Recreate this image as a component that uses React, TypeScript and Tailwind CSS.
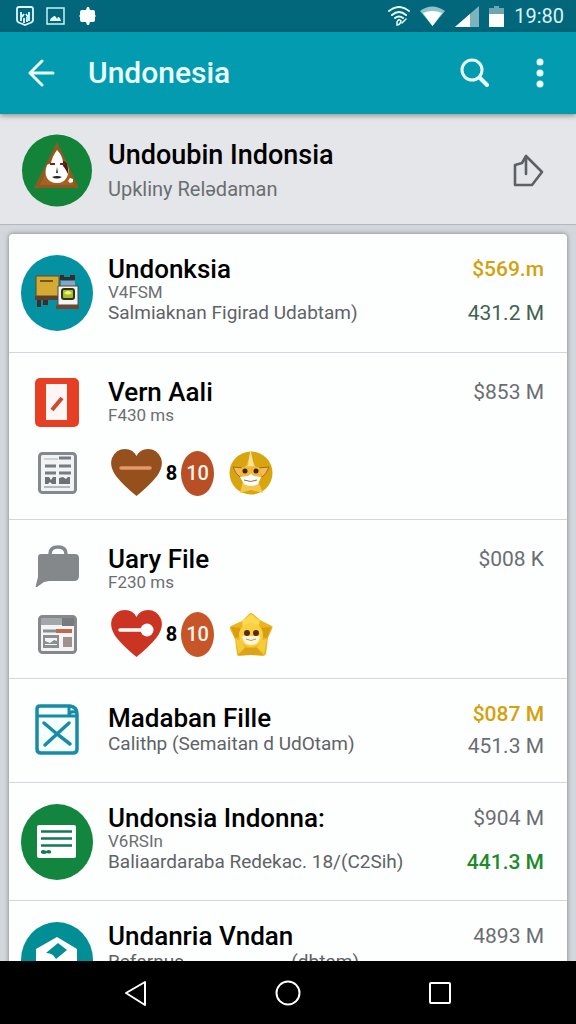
import type { ReactNode } from 'react';
import clsx from 'clsx';

type Amount = { text: string; className: string };

type RowProps = {
    icon: ReactNode;
    title: string;
    small?: string;
    detail?: ReactNode;
    amounts: Amount[];
    className?: string;
    amountsClassName?: string;
};

const GRAY = 'text-[#6b6e71]';
const GOLD = 'text-[#d4a10c] font-medium';

function StatusBar() {
    return (
        <div className="h-8 shrink-0 bg-[#02677b] flex items-center justify-between pl-4 pr-3">
            <div className="flex items-center gap-3">
                <svg width="18" height="20" viewBox="0 0 18 20" fill="none" stroke="#dff8fc" strokeWidth="1.8">
                    <path d="M3 1h12q2 0 2 2v11q0 2-3 3l-5 2-5-2q-3-1-3-3V3q0-2 2-2z" />
                    <path d="M5 6v9M13 6v9M6 11l2-3M12 11l-2-3M8 12v5M11 11v5" />
                </svg>
                <svg width="20" height="18" viewBox="0 0 20 18">
                    <rect x="1" y="1" width="17" height="16" fill="none" stroke="#c9f2f7" strokeWidth="1.5" />
                    <path d="M4 14q0-3 3-4 1-2 3 0l1 2 1-2q2 0 3 4z" fill="#eaffff" />
                </svg>
                <svg width="20" height="20" viewBox="0 0 20 20" fill="#fff">
                    <path d="M4 4h4l1-3h2l1 3h3q2 0 2 2v3l1 1-1 1v3q0 2-2 2h-3l-1 3H9l-1-3H4q-2 0-2-2v-3l-1-1 1-1V6q0-2 2-2z" />
                </svg>
            </div>
            <div className="flex items-center gap-2.5">
                <svg width="22" height="20" viewBox="0 0 22 20" fill="none" stroke="#eaffff" strokeWidth="2" strokeLinecap="round">
                    <path d="M1 5Q11-3 21 5M4 9Q11 3 18 9M7 12q4-3 8 0" />
                    <path d="M9 16q2-4 4-1-1 4-4 4zM14 17l4-4" strokeWidth="1.500" />
                </svg>
                <svg width="25" height="20" viewBox="0 0 25 20">
                    <path d="M0 5Q12-4 25 5L12.500 20z" fill="#8ec3cc" />
                    <path d="M3 7Q12 3 22 7L12.500 20z" fill="#fff" />
                </svg>
                <svg width="24" height="21" viewBox="0 0 24 21">
                    <path d="M24 0v21H0z" fill="#7db2be" />
                    <path d="M15 8v13H0z" fill="#fff" />
                </svg>
                <svg width="15" height="21" viewBox="0 0 15 21">
                    <path d="M5 0h5v2h5v7H0V2h5z" fill="#6ea5b2" />
                    <path d="M0 8h15v13H0z" fill="#fff" />
                </svg>
                <span className="text-[20px] leading-6 text-[#d9f3f7]">19:80</span>
            </div>
        </div>
    );
}

function Toolbar() {
    return (
        <header className="relative z-10 h-[82px] shrink-0 bg-[#039bb0] shadow-[0_2px_5px_rgba(0,0,0,0.35)] flex items-center px-7 text-[#eaffff]">
            <button type="button" aria-label="Back">
                <svg width="27" height="28" viewBox="0 0 27 28" fill="none" stroke="currentColor" strokeWidth="3" strokeLinecap="round" strokeLinejoin="round">
                    <path d="M25 14H2M14 2L2 14l12 12" />
                </svg>
            </button>
            <h1 className="ml-[33px] flex-1 text-[30px] leading-9 font-medium">Undonesia</h1>
            <button type="button" aria-label="Search">
                <svg width="30" height="30" viewBox="0 0 30 30" fill="none" stroke="currentColor" strokeLinecap="round">
                    <circle cx="12" cy="12" r="10" strokeWidth="3" />
                    <path d="M20 20l7 7" strokeWidth="4" />
                </svg>
            </button>
            <button type="button" aria-label="More options" className="ml-[42px]">
                <svg width="16" height="30" viewBox="0 0 16 30" fill="currentColor">
                    <circle cx="8" cy="4" r="3.500" />
                    <circle cx="8" cy="15" r="3.500" />
                    <circle cx="8" cy="26" r="3.500" />
                </svg>
            </button>
        </header>
    );
}

function Profile() {
    return (
        <section className="shrink-0 bg-[#e4e6e9] border-b border-[#b3b8bc] flex items-center pl-[21px] pr-8 pt-5 pb-[17px]">
            <svg className="shrink-0" width="72" height="73" viewBox="0 0 72 73">
                <ellipse cx="36" cy="36.500" rx="35" ry="36" fill="#14833a" />
                <path d="M36 8L58 54H13z" fill="#8f5a22" />
                <path d="M36 15L53 51H19z" fill="#a8621f" />
                <path d="M36 16q-5 7-6 13l-4 2q-3 8 0 13 3 5 10 5t10-6q3-7 0-13l-4-2q-1-7-6-12z" fill="#fff" />
                <path d="M42 27q5 1 5 7v6q-3-6-5-8z" fill="#4a1c14" />
                <path d="M29 29h5v2h-5zM39 29h5v2h-5z" fill="#8b1a12" />
                <path d="M36 33l-1 6h2z" fill="#333" />
                <path d="M31 43q5-2 10 0-5 3-10 0z" fill="#222" />
                <path d="M49 44l3 1v3l-3 1-2-2z" fill="#fff" />
            </svg>
            <div className="ml-[15px] flex-1 min-w-0">
                <h2 className="text-[27px] leading-7 font-medium text-black">Undoubin Indonsia</h2>
                <p className="mt-2 text-[20px] leading-6 text-[#6b6e71]">Upkliny Relədaman</p>
            </div>
            <button type="button" aria-label="Share">
                <svg width="32" height="34" viewBox="0 0 32 34" fill="none" stroke="#5c6166" strokeWidth="2.600" strokeLinejoin="round" strokeLinecap="round">
                    <path d="M14 2l16 16-10 13H3V11l7-2 4-7v18" />
                </svg>
            </button>
        </section>
    );
}

function MachineAvatar() {
    return (
        <svg width="72" height="76" viewBox="0 0 72 76">
            <ellipse cx="36" cy="38" rx="36" ry="38" fill="#0492a2" />
            <path d="M16 44h4v8h-4zM22 43h5v7h-5z" fill="#3d2c28" />
            <path d="M15 21h23v20H15z" fill="#d5aa33" stroke="#5c4a24" />
            <path d="M19 26h13" stroke="#4e3b16" strokeWidth="1.500" />
            <path d="M14 41h24v4H14z" fill="#5b4130" />
            <path d="M39 20h4v2h6v-2h5v5H39z" fill="#3a2a28" />
            <path d="M40 26h14v6H40z" fill="#8aa5c4" />
            <path d="M37 31h20v19H37z" fill="#f3f4f6" stroke="#594743" />
            <path d="M35 50h23v4H35z" fill="#70482f" />
            <rect x="41" y="34" width="12" height="10" rx="2" fill="#a9bf2a" stroke="#2e3417" strokeWidth="2" />
            <path d="M43 38q4-4 8 0-4 3-8 0z" fill="#eef27c" />
        </svg>
    );
}

function RedDocIcon() {
    return (
        <svg width="44" height="49" viewBox="0 0 44 49">
            <rect width="44" height="49" rx="5" fill="#e63f23" />
            <path d="M11 6h21v36H11z" fill="#fdf6f5" />
            <path d="M17 32l10-12" stroke="#cf4a2d" strokeWidth="4" />
        </svg>
    );
}

function NewsIcon() {
    return (
        <svg width="39" height="42" viewBox="0 0 39 42">
            <rect x="1.500" y="1.500" width="36" height="39" rx="3" fill="#f1f3f4" stroke="#84898d" strokeWidth="3" />
            <path d="M6 7h14" stroke="#c3c7ca" strokeWidth="1.500" />
            <path d="M21 6h12M7 14h11M21 14h12M7 21h11M21 21h12" stroke="#777c80" strokeWidth="3" />
            <path d="M7 25h4l2 3 2-3h3v7h-4l-2-2-2 2H7zM21 26l4-1 3 2 2-2h2v7H21z" fill="#6c7175" />
            <path d="M6 35h26" stroke="#9ea3a6" strokeWidth="1.500" />
        </svg>
    );
}

function BagIcon() {
    return (
        <svg width="44" height="42" viewBox="0 0 44 42">
            <path d="M15 9q0-7 8-7t8 7" fill="none" stroke="#85888b" strokeWidth="3.500" />
            <path d="M6 9h34q4 0 4 4v18q0 5-5 5H14l-5 1-7 5q-2 1-1-2l2-8V12q0-3 3-3z" fill="#85888b" />
        </svg>
    );
}

function LayoutIcon() {
    return (
        <svg width="39" height="39" viewBox="0 0 39 39">
            <rect x="1.500" y="1.500" width="36" height="36" rx="3" fill="#f3f4f5" stroke="#85898c" strokeWidth="3" />
            <path d="M3 3h21v7H3z" fill="#a4a7a9" />
            <path d="M24 3h12v8H24z" fill="#777b7e" />
            <path d="M5 16h15" stroke="#8a8e91" strokeWidth="3" />
            <path d="M18 16h16" stroke="#c0694f" strokeWidth="4" />
            <path d="M5 20h16v13H5z" fill="#8b8f92" />
            <path d="M7 23h12v3l-3-1-4 3-5-2zM7 29h12v1H7z" fill="#f3f4f5" />
            <path d="M25 22h9v10h-9z" fill="#a0908e" />
        </svg>
    );
}

function BlueDocIcon() {
    return (
        <svg width="44" height="51" viewBox="0 0 44 51" fill="none" stroke="#168ca5" strokeLinecap="round">
            <path d="M5 2h30q7 1 7 8v35q0 4-4 4H6q-4 0-4-4V5q0-3 3-3z" fill="#f6feff" strokeWidth="3.500" />
            <path d="M3 12h38M34 3v8q1-4 6-3" strokeWidth="3" />
            <path d="M9 19l13 11 13 10M34 19L22 30 10 41" strokeWidth="3.500" />
        </svg>
    );
}

function CardAvatar() {
    return (
        <svg width="72" height="76" viewBox="0 0 72 76">
            <ellipse cx="36" cy="38" rx="36" ry="38" fill="#12853e" />
            <rect x="16" y="21" width="39" height="33" rx="2" fill="#fff" />
            <path d="M20 27.500h31M20 34.500h31M20 41.500h31" stroke="#157a54" strokeWidth="2.500" />
            <path d="M20 47q2-2 5 0 3-2 5 0v2q-2 1-4 0-3 2-6 0z" fill="#157a54" />
        </svg>
    );
}

function BoxAvatar() {
    return (
        <svg width="72" height="76" viewBox="0 0 72 76">
            <ellipse cx="36" cy="38" rx="36" ry="38" fill="#028e95" />
            <path d="M15 27l21-12 20 12v27L36 64 15 54z" fill="#fff" />
            <path d="M25 31l12-10 9 7-11 9-3-4q-3-2-7-2z" fill="#028e95" />
        </svg>
    );
}

function HeartIcon({ red }: { red?: boolean }) {
    return (
        <svg width="51" height="48" viewBox="0 0 51 48">
            <path d="M25.500 47Q12 36 5 27-2 17 1 9 5 0 14 0q8 0 11.500 7Q29 0 37 0q9 0 13 9 3 8-4 18-7 9-20.500 20z" fill={red ? '#cb3422' : '#96501d'} />
            {red ? (
                <>
                    <path d="M9 20h24" stroke="#fff" strokeWidth="3.500" strokeLinecap="round" />
                    <circle cx="36" cy="20" r="6.500" fill="#fff" />
                </>
            ) : (
                <path d="M10 19h29" stroke="#e4986b" strokeWidth="3.500" strokeLinecap="round" />
            )}
        </svg>
    );
}

function CatFace() {
    return (
        <svg width="44" height="46" viewBox="0 0 44 46">
            <circle cx="22" cy="23" r="21.500" fill="#d8a50f" />
            <path d="M21 4l5 12 4 3-1 12 5 12-12-3-11 3 3-12-1-12 5-4z" fill="#f3c64c" />
            <path d="M21 2h1l3 14h-6z" fill="#f9e296" />
            <path d="M4 17l11 1-4 9q-4-2-7-10zM40 17l-11 1 4 9q4-2 7-10z" fill="#f5b95b" stroke="#a06c13" />
            <path d="M13 17h17l3 9-4 7H15l-4-7z" fill="#f0b93c" />
            <path d="M11 27l8-1 3-2 3 2 7 1-3 7q-7 4-14 0z" fill="#fff" />
            <circle cx="16" cy="21" r="2.500" fill="#432405" />
            <circle cx="27" cy="21" r="2.500" fill="#432405" />
            <path d="M15 30q7 3 13 0" fill="none" stroke="#936a42" />
        </svg>
    );
}

function StarFace() {
    return (
        <svg width="44" height="46" viewBox="0 0 44 46">
            <path d="M20 3q2-2 4 0l7 6 12 6q1 1 0 3l-4 9-2 16q-1 2-3 2l-12-1-12 1q-2 0-2-2L6 28 1 18q-1-2 1-3l11-5z" fill="#eab61c" />
            <path d="M22 3l9 7-2 6-7-3-8 3-1-6z" fill="#fbd950" />
            <path d="M42 16l-4 11-5-1-3-9zM2 16l11 1-3 9-4 1z" fill="#d99c12" />
            <path d="M6 28l5 1 5 7-6 7zM38 28l-5 1-5 7 7 7z" fill="#f5cb3c" />
            <path d="M16 37h12l6 7H9z" fill="#dda318" />
            <circle cx="22" cy="24" r="12" fill="#f9cf43" />
            <path d="M13 25h18q-1 9-9 9t-9-9z" fill="#fff6dc" />
            <circle cx="18" cy="22" r="3" fill="#5c2b0c" />
            <circle cx="27" cy="22" r="3" fill="#5c2b0c" />
            <path d="M17 28q5 3 10 0" fill="none" stroke="#c69655" />
        </svg>
    );
}

function Reactions({ red }: { red?: boolean }) {
    return (
        <div className="flex items-center h-12 pl-[3px]">
            <HeartIcon red={red} />
            <span className="w-[19px] text-center text-[20px] leading-6 font-bold text-black">8</span>
            <span className={clsx('w-[33px] h-[45px] rounded-[50%] flex items-center justify-center text-[20px] leading-6 font-medium text-[#fff3ec]', red ? 'bg-[#c65528]' : 'bg-[#b94f25]')}>
                10
            </span>
            <span className="ml-[15px]">{red ? <StarFace /> : <CatFace />}</span>
        </div>
    );
}

function Row({ icon, title, small, detail, amounts, className, amountsClassName }: RowProps) {
    return (
        <div className={clsx('flex items-start pl-3 pr-[23px]', className)}>
            <div className="w-[72px] shrink-0 flex justify-center">{icon}</div>
            <div className="ml-[15px] flex-1 min-w-0">
                <h3 className="text-[26px] leading-7 font-medium text-black">{title}</h3>
                {small && <p className="text-[17px] leading-[18px] text-[#6b6e71]">{small}</p>}
                {detail && <div className="text-[19px] leading-6 text-[#606366] whitespace-nowrap">{detail}</div>}
            </div>
            <div className={clsx('flex flex-col items-end text-[21px] leading-7', amountsClassName)}>
                {amounts.map((a) => (
                    <span key={a.text} className={a.className}>{a.text}</span>
                ))}
            </div>
        </div>
    );
}

function NavBar() {
    return (
        <nav className="h-[63px] shrink-0 bg-black flex items-center justify-center gap-[127px]">
            <button type="button" aria-label="Back">
                <svg width="24" height="28" viewBox="0 0 24 28" fill="none" stroke="#fff" strokeWidth="2" strokeLinejoin="round">
                    <path d="M21 3v23L2 14z" />
                </svg>
            </button>
            <button type="button" aria-label="Home">
                <svg width="26" height="26" viewBox="0 0 26 26" fill="none" stroke="#fff" strokeWidth="2">
                    <circle cx="13" cy="13" r="11.500" />
                </svg>
            </button>
            <button type="button" aria-label="Recent apps">
                <svg width="24" height="24" viewBox="0 0 24 24" fill="none" stroke="#fff" strokeWidth="2">
                    <rect x="2" y="2" width="20" height="20" rx="1" />
                </svg>
            </button>
        </nav>
    );
}

export default function App() {
    return (
        <div className="h-screen flex flex-col overflow-hidden bg-[#d3d6da] font-[Roboto,sans-serif]">
            <StatusBar />
            <Toolbar />
            <Profile />

            <main className="flex-1 min-h-0 overflow-hidden px-[9px] pt-[9px]">
                <ul className="bg-[#fdfefe] rounded-t-sm shadow-[0_0_5px_rgba(0,0,0,0.4)] divide-y divide-[#d3d6dc]">
                    <li>
                        <Row
                            className="pt-[21px] pb-[21px]"
                            icon={<MachineAvatar />}
                            title="Undonksia"
                            small="V4FSM"
                            detail="Salmiaknan Figirad Udabtam)"
                            amounts={[
                                { text: '$569.m', className: GOLD },
                                { text: '431.2 M', className: 'text-[#3f6350]' },
                            ]}
                            amountsClassName="gap-4"
                        />
                    </li>
                    <li>
                        <Row
                            className="pt-[25px]"
                            icon={<RedDocIcon />}
                            title="Vern Aali"
                            small="F430 ms"
                            amounts={[{ text: '$853 M', className: GRAY }]}
                        />
                        <div className="flex items-center pl-3 pt-[22px] pb-[22px]">
                            <div className="w-[72px] mr-[15px] flex justify-center"><NewsIcon /></div>
                            <Reactions />
                        </div>
                    </li>
                    <li>
                        <Row
                            className="pt-[25px]"
                            icon={<BagIcon />}
                            title="Uary File"
                            small="F230 ms"
                            amounts={[{ text: '$008 K', className: GRAY }]}
                        />
                        <div className="flex items-center pl-3 pt-[19px] pb-[20px]">
                            <div className="w-[72px] mr-[15px] flex justify-center"><LayoutIcon /></div>
                            <Reactions red />
                        </div>
                    </li>
                    <li>
                        <Row
                            className="pt-[25px] pb-[22px]"
                            icon={<BlueDocIcon />}
                            title="Madaban Fille"
                            detail="Calithp (Semaitan d UdOtam)"
                            amounts={[
                                { text: '$087 M', className: GOLD },
                                { text: '451.3 M', className: GRAY },
                            ]}
                            amountsClassName="gap-1 -mt-1"
                        />
                    </li>
                    <li>
                        <Row
                            className="pt-[21px] pb-[20px]"
                            icon={<CardAvatar />}
                            title="Undonsia Indonna:"
                            small="V6RSIn"
                            detail="Baliaardaraba Redekac. 18/(C2Sih)"
                            amounts={[
                                { text: '$904 M', className: GRAY },
                                { text: '441.3 M', className: 'text-[#1f8a2c] font-medium' },
                            ]}
                            amountsClassName="gap-4"
                        />
                    </li>
                    <li>
                        <Row
                            className="pt-[21px] pb-[20px]"
                            icon={<BoxAvatar />}
                            title="Undanria Vndan"
                            detail={
                                <span className="flex justify-between w-[251px]">
                                    <span>Refarnus</span>
                                    <span>(dbtam)</span>
                                </span>
                            }
                            amounts={[{ text: '4893 M', className: GRAY }]}
                        />
                    </li>
                </ul>
            </main>

            <NavBar />
        </div>
    );
}
